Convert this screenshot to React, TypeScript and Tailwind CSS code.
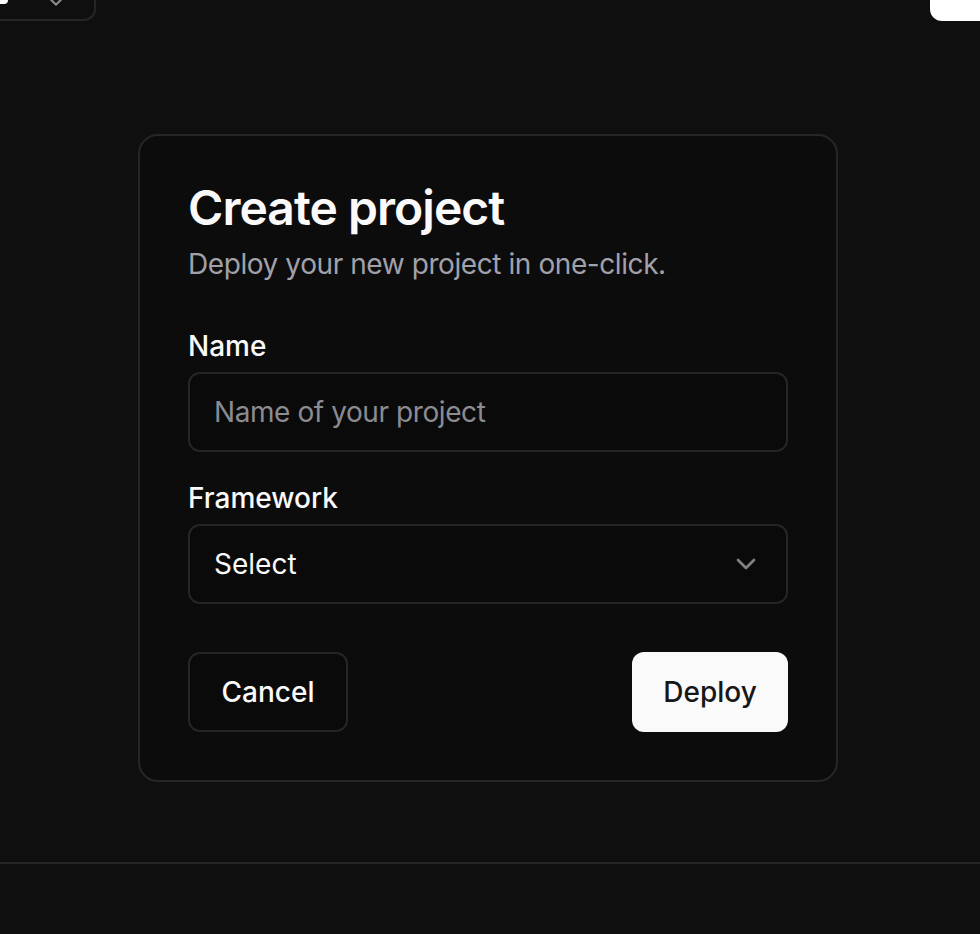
import { ChevronDown, ChevronsUpDown } from "lucide-react";

export default function App() {
  return (
    <div className="min-h-[934px] bg-[#0f0f0f] text-[#fafafa] font-['Inter',sans-serif] overflow-hidden">
      {/* bits of the header, scrolled off the top */}
      <div className="flex h-[21px] items-end justify-between overflow-hidden">
        <div className="-ml-[40px] flex h-[80px] w-[136px] shrink-0 items-end justify-between rounded-xl border-2 border-[#262626] pl-[32px] pr-[25px]">
          <div className="mb-[15px] h-[12px] w-[14px] rounded-sm bg-white" />
          <ChevronsUpDown className="mb-[10px] h-[26px] w-[26px] text-[#8a8a8a]" strokeWidth={2} />
        </div>
        <div className="-mr-[40px] flex h-[80px] w-[90px] shrink-0 items-start justify-start rounded-xl bg-white pl-[28px] pt-[42px]">
          <div className="h-[17px] w-[18px] rounded-[3px] border-[3px] border-[#171717]" />
        </div>
      </div>

      <div className="ml-[138px] mt-[113px] w-[700px] rounded-[20px] border-2 border-[#262626] bg-[#0c0c0c]">
        <div className="flex flex-col gap-3 px-12 pb-12 pt-12">
          <h1 className="text-[48px] font-semibold leading-none tracking-[-0.02em]">Create project</h1>
          <p className="text-[28px] leading-[40px] tracking-[-0.015em] text-[#a1a1aa]">
            Deploy your new project in one-click.
          </p>
        </div>

        <div className="flex flex-col gap-8 px-12 pb-12">
          <div className="flex flex-col gap-3">
            <label className="text-[28px] font-medium leading-none">Name</label>
            <input
              placeholder="Name of your project"
              className="h-[80px] w-full rounded-xl border-2 border-[#262626] bg-[#0a0a0a] px-6 text-[28px] tracking-[-0.015em] text-[#fafafa] outline-none placeholder:text-[#8b8b92]"
            />
          </div>
          <div className="flex flex-col gap-3">
            <label className="text-[28px] font-medium leading-none">Framework</label>
            <button className="flex h-[80px] w-full items-center justify-between rounded-xl border-2 border-[#262626] bg-[#0a0a0a] px-6 text-[28px]">
              <span>Select</span>
              <ChevronDown className="h-8 w-8 text-[#fafafa] opacity-50" strokeWidth={2} />
            </button>
          </div>
        </div>

        <div className="flex items-center justify-between px-12 pb-12">
          <button className="h-[80px] w-[160px] rounded-xl border-2 border-[#262626] bg-[#0a0a0a] text-[28px] font-medium">
            Cancel
          </button>
          <button className="h-[80px] w-[156px] rounded-xl bg-[#fafafa] text-[28px] font-medium text-[#171717]">
            Deploy
          </button>
        </div>
      </div>

      <div className="mt-[80px] h-[2px] w-full bg-[#262626]" />
    </div>
  );
}
